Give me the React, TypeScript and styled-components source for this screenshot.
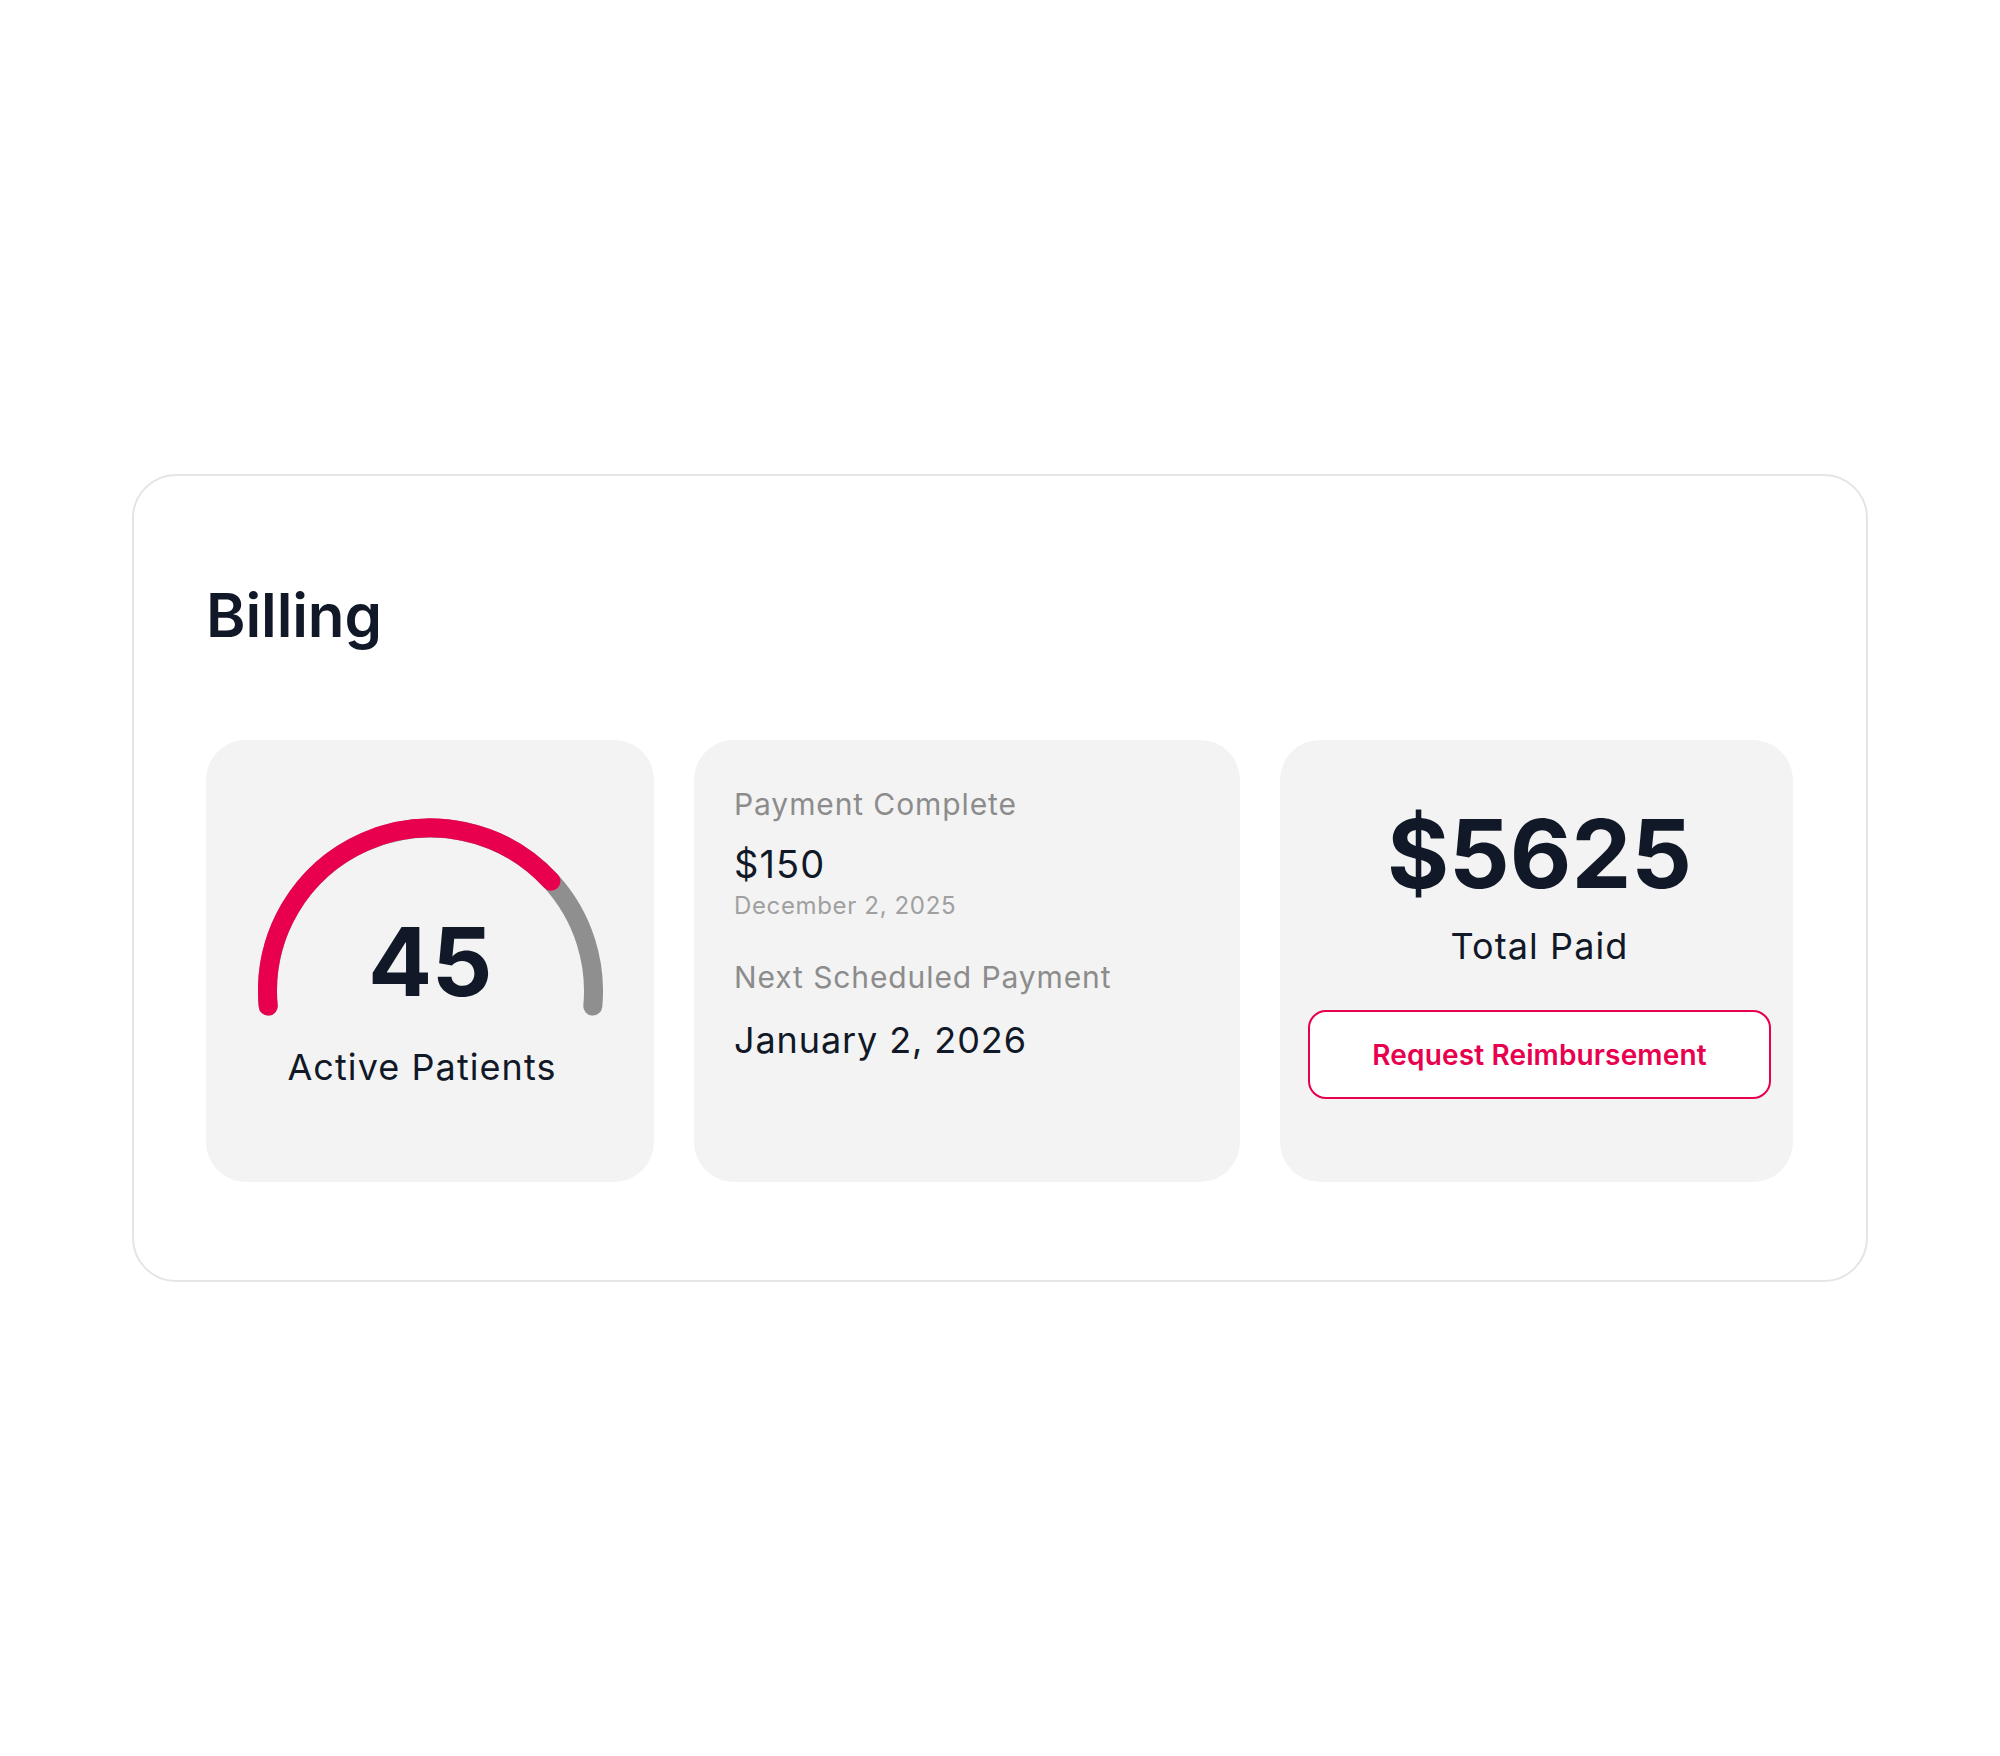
import React from "react";
import styled, { createGlobalStyle } from "styled-components";

const GlobalStyle = createGlobalStyle`
    * {
        box-sizing: border-box;
    }
    body {
        margin: 0;
        background-color: #fff;
        font-family: Inter, "Noto Sans", sans-serif;
        color: #111827;
    }
`;

const ACCENT = "#E8004F";

// gauge geometry, in svg pixels
const R = 163;
const CX = 172.5;
const CY = 173;
const OVERSHOOT = 5.3; // degrees the arc runs below the horizontal on each side

const point = (deg: number) => {
    const rad = (deg * Math.PI) / 180;
    return [CX + R * Math.cos(rad), CY - R * Math.sin(rad)];
};

const arcPath = (from: number, to: number) => {
    const [x1, y1] = point(from);
    const [x2, y2] = point(to);
    const large = from - to > 180 ? 1 : 0;
    return `M ${x1.toFixed(2)} ${y1.toFixed(2)} A ${R} ${R} 0 ${large} 1 ${x2.toFixed(2)} ${y2.toFixed(2)}`;
};

const Gauge: React.FC<{ value: number; max: number }> = ({ value, max }) => {
    const start = 180 + OVERSHOOT;
    const end = -OVERSHOOT;
    const filled = start - (start - end) * (value / max);
    return (
        <GaugeWrap>
            <svg width="345" height="200" viewBox="0 0 345 200">
                <path d={arcPath(start, end)} fill="none" stroke="#8F8F8F" strokeWidth="19" strokeLinecap="round" />
                <path d={arcPath(start, filled)} fill="none" stroke={ACCENT} strokeWidth="19" strokeLinecap="round" />
            </svg>
            <GaugeValue>{value}</GaugeValue>
        </GaugeWrap>
    );
};

const App: React.FC = () => {
    return (
        <>
            <GlobalStyle />
            <Page>
                <Panel>
                    <Title>Billing</Title>
                    <Cards>
                        <PatientsCard>
                            <Gauge value={45} max={60} />
                            <GaugeLabel>Active Patients</GaugeLabel>
                        </PatientsCard>
                        <PaymentsCard>
                            <Label>Payment Complete</Label>
                            <Amount>$150</Amount>
                            <SubDate>December 2, 2025</SubDate>
                            <Label className="next">Next Scheduled Payment</Label>
                            <NextDate>January 2, 2026</NextDate>
                        </PaymentsCard>
                        <TotalCard>
                            <Total>$5625</Total>
                            <TotalLabel>Total Paid</TotalLabel>
                            <OutlineButton>Request Reimbursement</OutlineButton>
                        </TotalCard>
                    </Cards>
                </Panel>
            </Page>
        </>
    );
};

export default App;

const Page = styled.div`
    width: 100%;
    height: 1756px;
    display: flex;
    align-items: center;
    justify-content: center;
`;

const Panel = styled.div`
    width: 1736px;
    border: 2px solid #E5E5E5;
    border-radius: 44px;
    padding: 103px 73px 98px 72px;
    background-color: #fff;
`;

const Title = styled.h1`
    margin: 0 0 89px 0;
    font-size: 60px;
    line-height: 72px;
    font-weight: 600;
    letter-spacing: -0.1px;
    color: #111827;
`;

const Cards = styled.div`
    display: grid;
    grid-template-columns: 448px 546px 1fr;
    gap: 40px;
`;

const Card = styled.div`
    background-color: #F3F3F3;
    border-radius: 40px;
    height: 442px;
    display: flex;
    flex-direction: column;
`;

const PatientsCard = styled(Card)`
    align-items: center;
    padding-top: 78px;
`;

const GaugeWrap = styled.div`
    position: relative;
    width: 345px;
    height: 200px;
    > svg {
        display: block;
    }
`;

const GaugeValue = styled.div`
    position: absolute;
    left: 0;
    right: 0;
    top: 96px;
    text-align: center;
    font-size: 95px;
    line-height: 96px;
    font-weight: 700;
    letter-spacing: -0.5px;
    color: #111827;
`;

const GaugeLabel = styled.div`
    margin: 27px 16px 0 0;
    font-size: 36px;
    line-height: 44px;
    letter-spacing: 0.03em;
    color: #111827;
`;

const PaymentsCard = styled(Card)`
    padding: 46px 40px 0 40px;
`;

const Label = styled.div`
    font-size: 30px;
    line-height: 36px;
    letter-spacing: 0.03em;
    color: #8C8C8C;
    &.next {
        margin-top: 38px;
    }
`;

const Amount = styled.div`
    margin-top: 19px;
    font-size: 38px;
    line-height: 46px;
    letter-spacing: 0.03em;
    color: #111827;
`;

const SubDate = styled.div`
    margin-top: 4px;
    font-size: 24px;
    line-height: 30px;
    letter-spacing: 0.027em;
    color: #A0A0A0;
`;

const NextDate = styled.div`
    margin-top: 23px;
    font-size: 36px;
    line-height: 44px;
    letter-spacing: 0.025em;
    color: #111827;
`;

const TotalCard = styled(Card)`
    align-items: center;
    padding: 59px 22px 0 28px;
`;

const Total = styled.div`
    font-size: 95px;
    line-height: 110px;
    font-weight: 700;
    color: #111827;
`;

const TotalLabel = styled.div`
    margin-top: 15px;
    font-size: 36px;
    line-height: 44px;
    letter-spacing: 0.03em;
    color: #111827;
`;

const OutlineButton = styled.button`
    margin-top: 42px;
    width: 100%;
    height: 89px;
    border: 2px solid ${ACCENT};
    border-radius: 18px;
    background-color: #fff;
    color: ${ACCENT};
    font-family: Inter, "Noto Sans", sans-serif;
    font-size: 28px;
    font-weight: 600;
    letter-spacing: 0.005em;
    cursor: pointer;
`;
